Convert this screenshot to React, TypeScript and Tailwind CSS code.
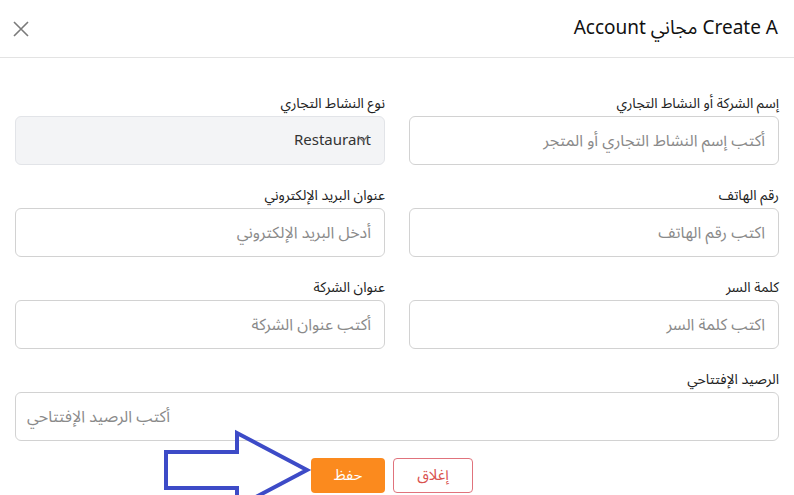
import React from "react";

const font = { fontFamily: '"Noto Sans Arabic", "Noto Sans", "DejaVu Sans", sans-serif' };

function Field({ label, placeholder, full }: { label: string; placeholder: string; full?: boolean }) {
  return (
    <div className={full ? "col-span-2" : ""}>
      <div className="text-[14px] leading-[20px] text-[#222] mb-[2px]">{label}</div>
      <input
        dir={full ? "ltr" : "rtl"}
        placeholder={placeholder}
        className={
          "w-full h-[49px] rounded-[6px] border border-[#d2d2d2] bg-white text-[16px] text-[#333] placeholder:text-[#8a8a8a] outline-none " +
          (full ? "pl-[11px] pr-[13px] text-left" : "px-[13px] text-right")
        }
        style={font}
      />
    </div>
  );
}

export default function App() {
  return (
    <div dir="rtl" className="relative w-[794px] h-[495px] overflow-hidden bg-white" style={font}>
      <div className="h-[58px] border-b border-[#e3e3e3] flex items-center justify-between pr-[16px] pl-[12px]">
        <div className="text-[19px] text-[#111] leading-none">Create A مجاني Account</div>
        <svg width="18" height="18" viewBox="0 0 18 18" className="text-[#7a7a7a]">
          <path d="M2 2 L16 16 M16 2 L2 16" stroke="currentColor" strokeWidth="1.6" fill="none" />
        </svg>
      </div>
      <div className="px-[15px] pt-[36px]">
        <div className="grid grid-cols-2 gap-x-[24px] gap-y-[21px]">
          <Field label="إسم الشركة أو النشاط التجاري" placeholder="أكتب إسم النشاط التجاري أو المتجر" />
          <div>
            <div className="text-[14px] leading-[20px] text-[#222] mb-[2px]">نوع النشاط التجاري</div>
            <div className="relative w-full h-[49px] rounded-[6px] border border-[#e2e4e8] bg-[#f3f4f6] flex items-center px-[13px]">
              <span dir="ltr" className="text-[15px] text-[#333]">Restaurant</span>
              <svg width="12" height="10" viewBox="0 0 12 10" className="absolute right-[15px] top-[18px] text-[#777]">
                <path d="M1 1 L6 6 L11 1" stroke="currentColor" strokeWidth="1.4" fill="none" />
              </svg>
            </div>
          </div>
          <Field label="رقم الهاتف" placeholder="اكتب رقم الهاتف" />
          <Field label="عنوان البريد الإلكتروني" placeholder="أدخل البريد الإلكتروني" />
          <Field label="كلمة السر" placeholder="اكتب كلمة السر" />
          <Field label="عنوان الشركة" placeholder="أكتب عنوان الشركة" />
          <Field full label="الرصيد الإفتتاحي" placeholder="أكتب الرصيد الإفتتاحي" />
        </div>
        <div className="flex justify-center gap-[8px] mt-[17px] pr-[10px]">
          <button className="w-[80px] h-[35px] rounded-[4px] border border-[#e0737c] text-[#d9534f] text-[15px] bg-white" style={font}>إغلاق</button>
          <button className="w-[74px] h-[35px] rounded-[4px] bg-[#fb8a1e] text-white text-[15px]" style={font}>حفظ</button>
        </div>
      </div>
      <svg className="absolute left-0 top-0 pointer-events-none" width="794" height="495" viewBox="0 0 794 495">
        <polygon
          points="166,452 237,452 237,433 307,470 237,507 237,488 166,488"
          fill="none"
          stroke="#3d4bc7"
          strokeWidth="4"
          strokeLinejoin="miter"
        />
      </svg>
    </div>
  );
}
